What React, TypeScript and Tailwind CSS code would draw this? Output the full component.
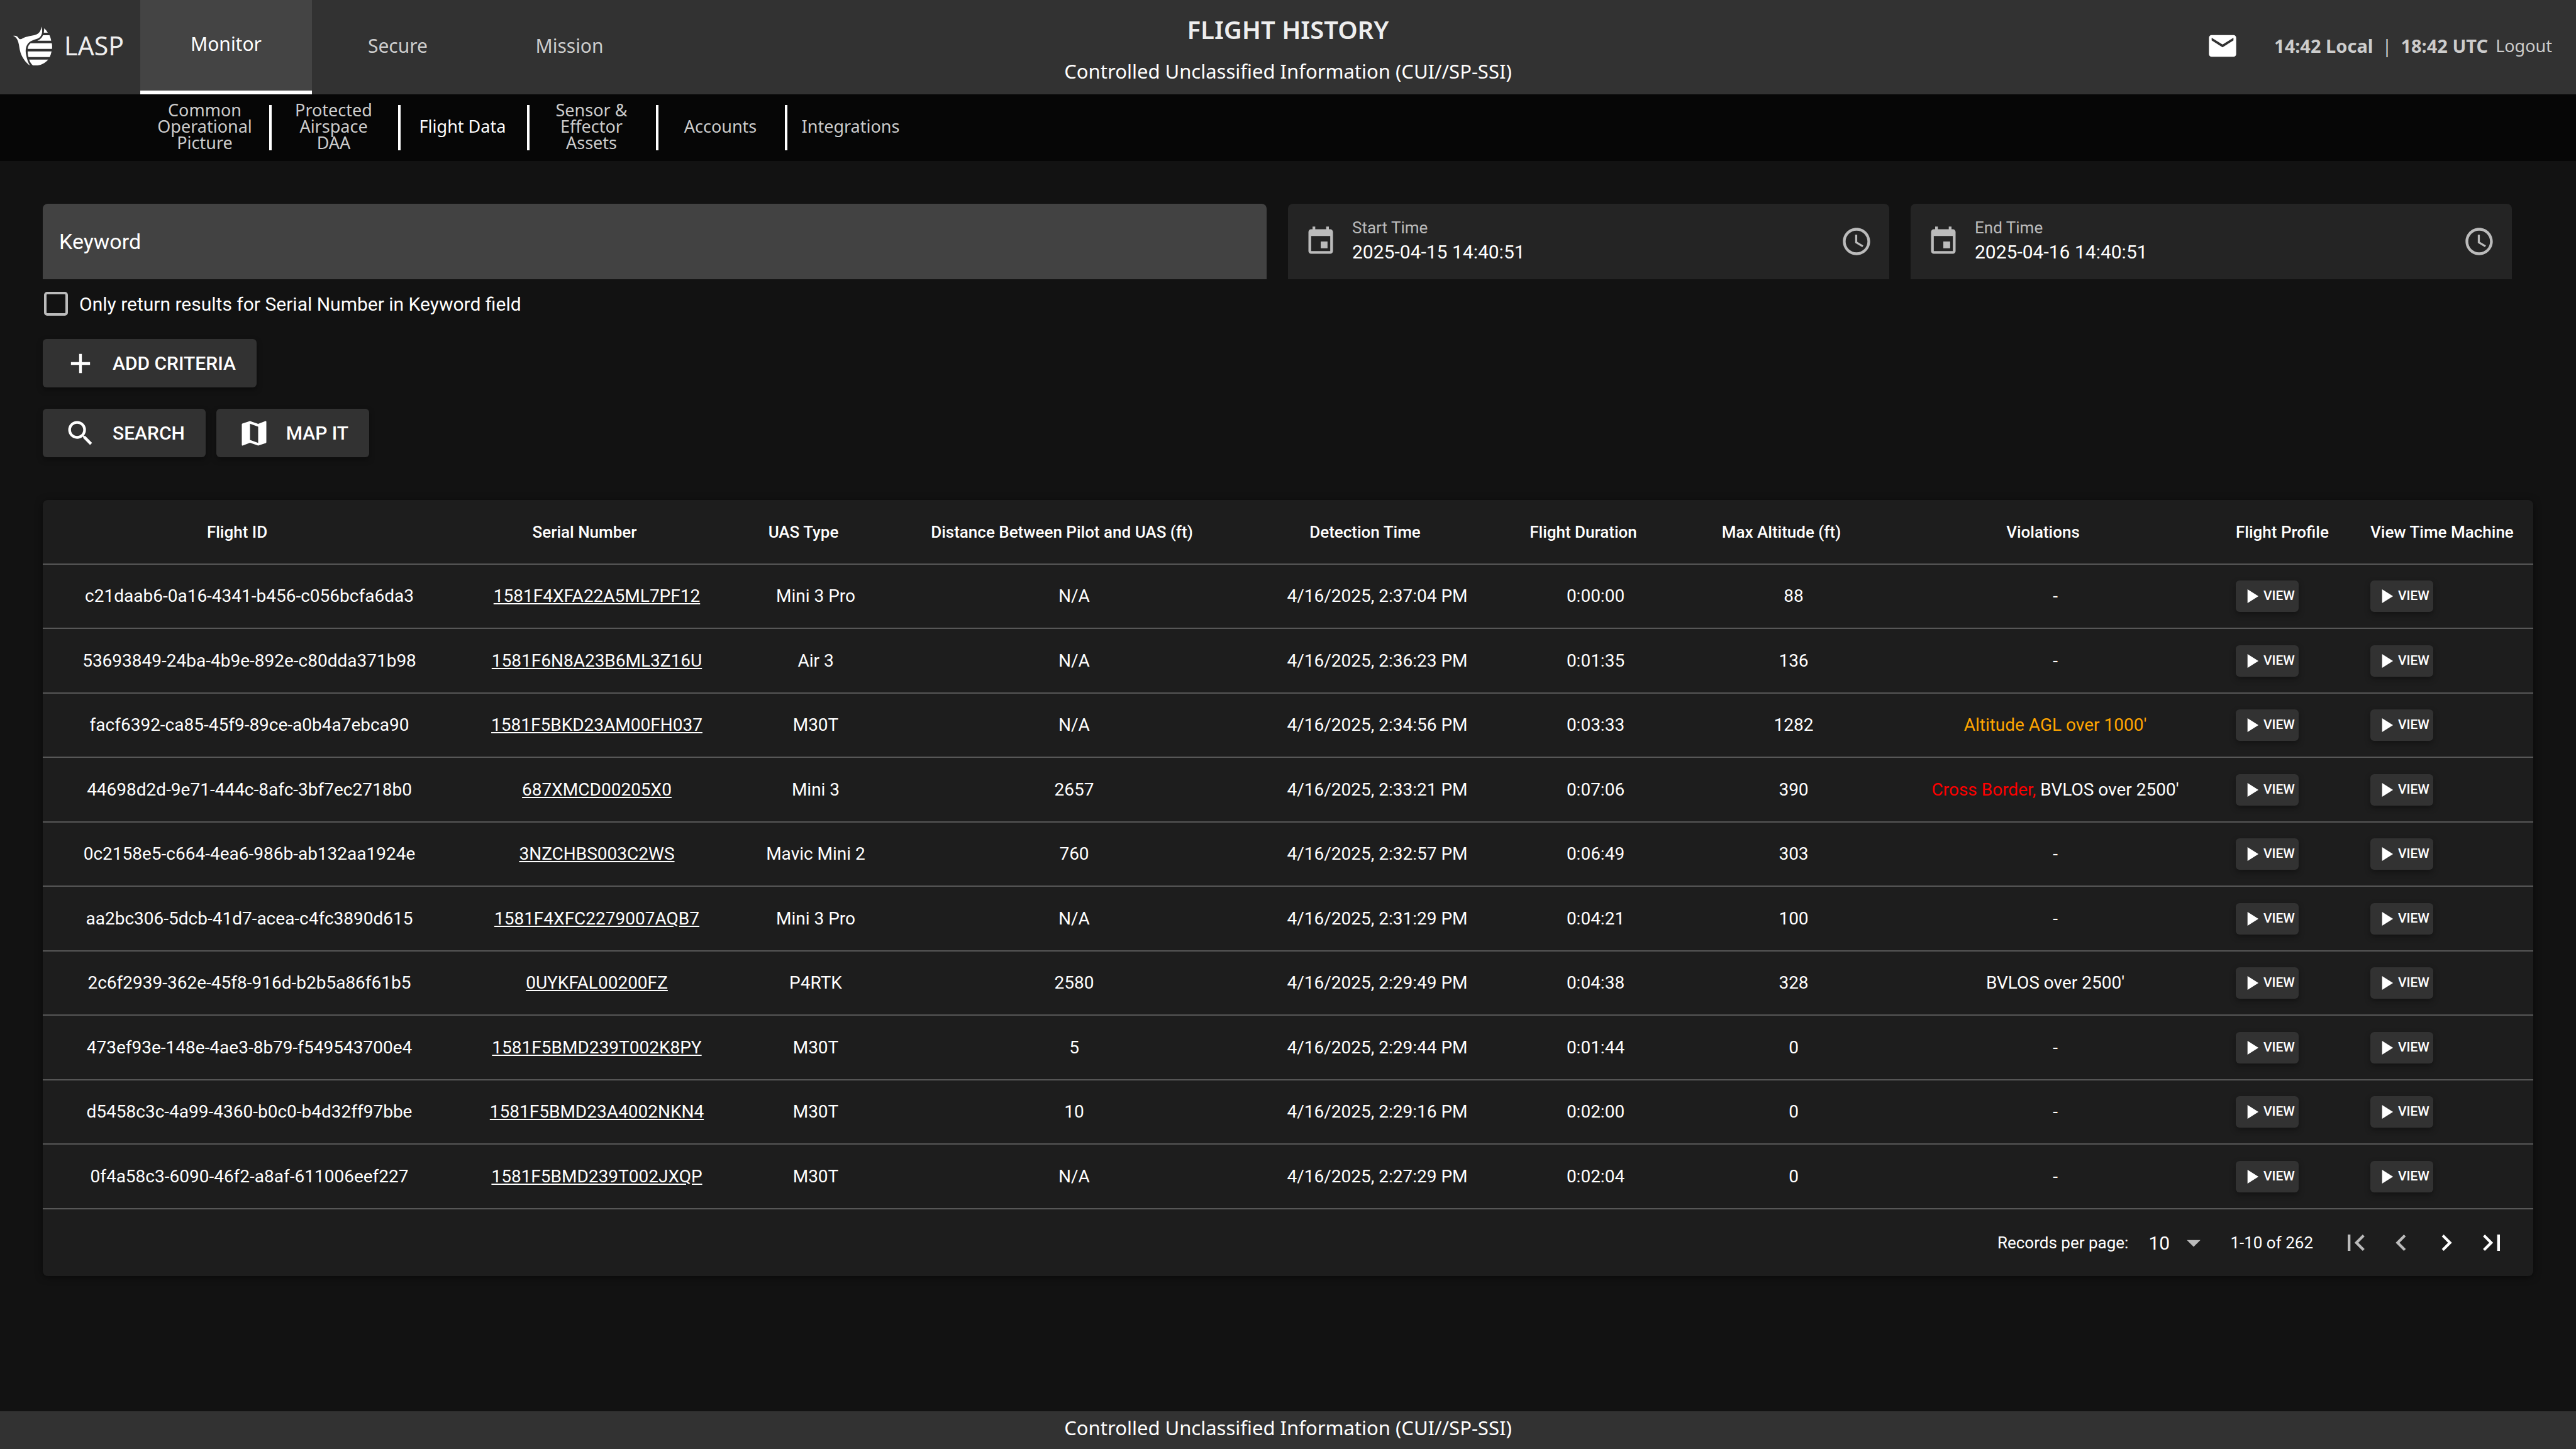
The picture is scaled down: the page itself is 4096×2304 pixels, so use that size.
import React from 'react';
import {
  MdAccessTime,
  MdAdd,
  MdArrowDropDown,
  MdChevronLeft,
  MdChevronRight,
  MdEvent,
  MdFirstPage,
  MdLastPage,
  MdMail,
  MdMap,
  MdPlayArrow,
  MdSearch,
} from 'react-icons/md';

interface Violation {
  text: string;
  tone: string;
}

interface Flight {
  id: string;
  serial: string;
  type: string;
  distance: string;
  detected: string;
  duration: string;
  altitude: number;
  violations?: Violation[];
}

const BANNER = 'Controlled Unclassified Information (CUI//SP-SSI)';

const tabs = ['Monitor', 'Secure', 'Mission'];

const subTabs = [
  'Common Operational Picture',
  'Protected Airspace DAA',
  'Flight Data',
  'Sensor & Effector Assets',
  'Accounts',
  'Integrations',
];

const columns = [
  { label: 'Flight ID', width: 'w-[657px]' },
  { label: 'Serial Number', width: 'w-[448px]' },
  { label: 'UAS Type', width: 'w-[248px]' },
  { label: 'Distance Between Pilot and UAS (ft)', width: 'w-[574px]' },
  { label: 'Detection Time', width: 'w-[390px]' },
  { label: 'Flight Duration', width: 'w-[304px]' },
  { label: 'Max Altitude (ft)', width: 'w-[326px]' },
  { label: 'Violations', width: 'w-[506px]' },
  { label: 'Flight Profile', width: 'w-[214px]', left: true },
  { label: 'View Time Machine', width: 'w-[293px]', left: true },
];

const flights: Flight[] = [
  { id: 'c21daab6-0a16-4341-b456-c056bcfa6da3', serial: '1581F4XFA22A5ML7PF12', type: 'Mini 3 Pro', distance: 'N/A', detected: '4/16/2025, 2:37:04 PM', duration: '0:00:00', altitude: 88 },
  { id: '53693849-24ba-4b9e-892e-c80dda371b98', serial: '1581F6N8A23B6ML3Z16U', type: 'Air 3', distance: 'N/A', detected: '4/16/2025, 2:36:23 PM', duration: '0:01:35', altitude: 136 },
  {
    id: 'facf6392-ca85-45f9-89ce-a0b4a7ebca90', serial: '1581F5BKD23AM00FH037', type: 'M30T', distance: 'N/A', detected: '4/16/2025, 2:34:56 PM', duration: '0:03:33', altitude: 1282,
    violations: [{ text: "Altitude AGL over 1000'", tone: 'text-[#ffa500]' }],
  },
  {
    id: '44698d2d-9e71-444c-8afc-3bf7ec2718b0', serial: '687XMCD00205X0', type: 'Mini 3', distance: '2657', detected: '4/16/2025, 2:33:21 PM', duration: '0:07:06', altitude: 390,
    violations: [
      { text: 'Cross Border,', tone: 'text-[#ff0000]' },
      { text: "BVLOS over 2500'", tone: 'text-white' },
    ],
  },
  { id: '0c2158e5-c664-4ea6-986b-ab132aa1924e', serial: '3NZCHBS003C2WS', type: 'Mavic Mini 2', distance: '760', detected: '4/16/2025, 2:32:57 PM', duration: '0:06:49', altitude: 303 },
  { id: 'aa2bc306-5dcb-41d7-acea-c4fc3890d615', serial: '1581F4XFC2279007AQB7', type: 'Mini 3 Pro', distance: 'N/A', detected: '4/16/2025, 2:31:29 PM', duration: '0:04:21', altitude: 100 },
  {
    id: '2c6f2939-362e-45f8-916d-b2b5a86f61b5', serial: '0UYKFAL00200FZ', type: 'P4RTK', distance: '2580', detected: '4/16/2025, 2:29:49 PM', duration: '0:04:38', altitude: 328,
    violations: [{ text: "BVLOS over 2500'", tone: 'text-white' }],
  },
  { id: '473ef93e-148e-4ae3-8b79-f549543700e4', serial: '1581F5BMD239T002K8PY', type: 'M30T', distance: '5', detected: '4/16/2025, 2:29:44 PM', duration: '0:01:44', altitude: 0 },
  { id: 'd5458c3c-4a99-4360-b0c0-b4d32ff97bbe', serial: '1581F5BMD23A4002NKN4', type: 'M30T', distance: '10', detected: '4/16/2025, 2:29:16 PM', duration: '0:02:00', altitude: 0 },
  { id: '0f4a58c3-6090-46f2-a8af-611006eef227', serial: '1581F5BMD239T002JXQP', type: 'M30T', distance: 'N/A', detected: '4/16/2025, 2:27:29 PM', duration: '0:02:04', altitude: 0 },
];

const Logo: React.FC = () => (
  <svg viewBox="30 32 192 192" className="w-16 h-16" fill="#ffffff" aria-hidden="true">
    <path d="M33 80 C45 78 54 82 59 91 C63 97 70 97 78 92 C98 81 120 82 140 75 C156 69 166 58 167 36 C174 54 173 74 160 87 C147 98 123 98 107 113 C92 128 90 150 95 172 C99 193 105 208 113 222 C93 208 76 184 68 160 C62 141 62 124 57 109 C53 95 46 85 33 80 Z" />
    <path d="M180 44 C187 49 193 57 198 65 H179 C180 58 181 51 180 44 Z" />
    <path d="M175 77 H206 C210 85 213 94 214 103 H148 C161 98 170 90 175 77 Z" />
    <path d="M116 115 H217 C219 124 219 133 218 142 H102 C103 130 108 121 116 115 Z" />
    <path d="M102 154 H216 C214 164 211 173 207 181 H106 C103 172 102 163 102 154 Z" />
    <path d="M109 193 H200 C186 210 164 221 140 221 H127 C119 214 113 204 109 193 Z" />
  </svg>
);

const TopBar: React.FC = () => (
  <header className="grid grid-cols-[1fr_auto_1fr] h-[150px] bg-[#323232] font-['Noto_Sans',sans-serif]">
    <div className="flex">
      <div className="flex items-center gap-[18px] w-[223px] pl-5 pb-1 text-[41px] text-[#eeeeee]">
        <Logo />
        <span>LASP</span>
      </div>
      <nav className="flex text-[30px]">
        {tabs.map((tab, i) => (
          <a
            key={tab}
            href="#"
            className={`flex items-center justify-center w-[273px] pb-1.5 ${
              i === 0 ? 'bg-[#444444] text-white border-b-6 border-white' : 'text-[#cccccc]'
            }`}
          >
            {tab}
          </a>
        ))}
      </nav>
    </div>

    <div className="pt-3.5 text-center">
      <h1 className="text-[40px] leading-[66px] font-semibold text-[#eeeeee]">FLIGHT HISTORY</h1>
      <p className="text-[31px] leading-[66px] text-white">{BANNER}</p>
    </div>

    <div className="flex items-center justify-end pr-[38px] pb-1 text-[29px] text-[#cccccc]">
      <button type="button" aria-label="Messages" className="mr-14 text-white">
        <MdMail size={52} />
      </button>
      <span className="font-bold">14:42 Local</span>
      <span className="mx-3.5">|</span>
      <span className="font-bold">18:42 UTC</span>
      <a href="#" className="ml-3 text-[27px]">Logout</a>
    </div>
  </header>
);

const SubNav: React.FC = () => (
  <nav className="flex items-center h-[106px] pl-[227px] bg-[#060606] font-['Noto_Sans',sans-serif] text-[27px] leading-[26px]">
    {subTabs.map((tab, i) => (
      <a
        key={tab}
        href="#"
        className={`flex items-center justify-center w-[205px] h-[72px] pl-4 pr-5 pb-1 text-center ${
          i < subTabs.length - 1 ? 'border-r-4 border-white' : ''
        } ${tab === 'Flight Data' ? 'text-white' : 'text-[#cccccc]'}`}
      >
        {tab}
      </a>
    ))}
  </nav>
);

const DateField: React.FC<{ id: string; label: string; value: string }> = ({ id, label, value }) => (
  <div className="w-1/4 pr-[34px]">
    <div className="flex items-center h-30 px-[26px] rounded-t-lg bg-[#242424] text-[#bbbbbb]">
      <MdEvent size={52} />
      <div className="flex flex-col flex-1 pl-6 pb-1">
        <label htmlFor={id} className="text-[26px] leading-[38px]">{label}</label>
        <input id={id} defaultValue={value} className="w-full text-[30px] leading-10 text-white outline-none" />
      </div>
      <button type="button" aria-label={`Pick ${label}`}>
        <MdAccessTime size={52} />
      </button>
    </div>
  </div>
);

const ActionButton: React.FC<{ icon: React.ReactNode; children: string }> = ({ icon, children }) => (
  <button
    type="button"
    className="flex items-center gap-[25px] h-[77px] pl-[34px] pr-[33px] rounded-md bg-[#323232] text-[30px] font-medium shadow-[0_4px_10px_rgba(0,0,0,0.35)]"
  >
    {icon}
    {children}
  </button>
);

const ViewButton: React.FC = () => (
  <button
    type="button"
    className="flex items-center h-[50px] px-1.5 rounded-md bg-[#323232] text-[21px] font-medium shadow-[0_4px_10px_rgba(0,0,0,0.35)]"
  >
    <MdPlayArrow size={38} />
    VIEW
  </button>
);

const SearchForm: React.FC = () => (
  <form onSubmit={(e) => e.preventDefault()}>
    <div className="flex">
      <div className="w-1/2 pr-[34px]">
        <input
          aria-label="Keyword"
          placeholder="Keyword"
          className="w-full h-30 px-[26px] rounded-t-lg bg-[#424242] text-[34px] text-white placeholder:text-white placeholder:opacity-100 outline-none"
        />
      </div>
      <DateField id="start-time" label="Start Time" value="2025-04-15 14:40:51" />
      <DateField id="end-time" label="End Time" value="2025-04-16 14:40:51" />
    </div>
    <label className="flex items-center gap-[18px] w-fit h-[78px] pl-0.5 text-[30px]">
      <input type="checkbox" className="appearance-none size-[38px] rounded-[5px] border-4 border-[#bbbbbb]" />
      Only return results for Serial Number in Keyword field
    </label>
    <div className="flex mt-[17px]">
      <ActionButton icon={<MdAdd size={52} />}>ADD CRITERIA</ActionButton>
    </div>
    <div className="flex gap-[17px] mt-[34px]">
      <ActionButton icon={<MdSearch size={52} />}>SEARCH</ActionButton>
      <ActionButton icon={<MdMap size={52} />}>MAP IT</ActionButton>
    </div>
  </form>
);

const FlightTable: React.FC = () => (
  <section className="mt-[68px] rounded-lg bg-[#1d1d1d] shadow-[0_2px_12px_rgba(0,0,0,0.5)]">
    <table className="table-fixed w-full border-separate border-spacing-0">
      <thead>
        <tr className="h-[103px] text-[26px]">
          {columns.map((col) => (
            <th
              key={col.label}
              className={`${col.width} pt-0.5 border-b-2 border-[#575757] font-medium whitespace-nowrap ${
                col.left ? 'pl-[34px] text-left' : 'pr-[39px]'
              }`}
            >
              {col.label}
            </th>
          ))}
        </tr>
      </thead>
      <tbody className="text-[28px] text-center">
        {flights.map((f) => (
          <tr key={f.id} className="odd:h-[102px] even:h-[103px] *:p-0 *:border-b-2 *:border-[#575757]">
            <td>{f.id}</td>
            <td>
              <a href="#" className="underline">{f.serial}</a>
            </td>
            <td>{f.type}</td>
            <td>{f.distance}</td>
            <td>{f.detected}</td>
            <td>{f.duration}</td>
            <td>{f.altitude}</td>
            <td>
              {f.violations
                ? f.violations.map((v) => (
                    <span key={v.text} className={v.tone}>{v.text} </span>
                  ))
                : '-'}
            </td>
            <td>
              <div className="pl-[34px]"><ViewButton /></div>
            </td>
            <td>
              <div className="pl-[34px]"><ViewButton /></div>
            </td>
          </tr>
        ))}
      </tbody>
    </table>

    <div className="flex items-center justify-end h-[106px] pr-[30px] text-[26px]">
      <label htmlFor="per-page">Records per page:</label>
      <div className="relative flex items-center ml-8 text-[30px]">
        <select id="per-page" className="appearance-none w-[98px] outline-none">
          <option>10</option>
        </select>
        <MdArrowDropDown size={52} className="absolute right-0 text-[#bbbbbb] pointer-events-none" />
      </div>
      <span className="mx-8">1-10 of 262</span>
      <button type="button" aria-label="First page" disabled className="flex justify-center w-[72px] text-[#bbbbbb]">
        <MdFirstPage size={52} />
      </button>
      <button type="button" aria-label="Previous page" disabled className="flex justify-center w-[72px] text-[#bbbbbb]">
        <MdChevronLeft size={52} />
      </button>
      <button type="button" aria-label="Next page" className="flex justify-center w-[72px]">
        <MdChevronRight size={52} />
      </button>
      <button type="button" aria-label="Last page" className="flex justify-center w-[72px]">
        <MdLastPage size={52} />
      </button>
    </div>
  </section>
);

export default function App() {
  return (
    <div className="flex flex-col min-h-screen bg-[#121212] text-white font-['Roboto',sans-serif]">
      <TopBar />
      <SubNav />
      <main className="flex-1 p-[68px]">
        <SearchForm />
        <FlightTable />
      </main>
      <footer className="h-[60px] bg-[#323232] text-center font-['Noto_Sans',sans-serif] text-[31px] leading-[52px]">
        {BANNER}
      </footer>
    </div>
  );
}
